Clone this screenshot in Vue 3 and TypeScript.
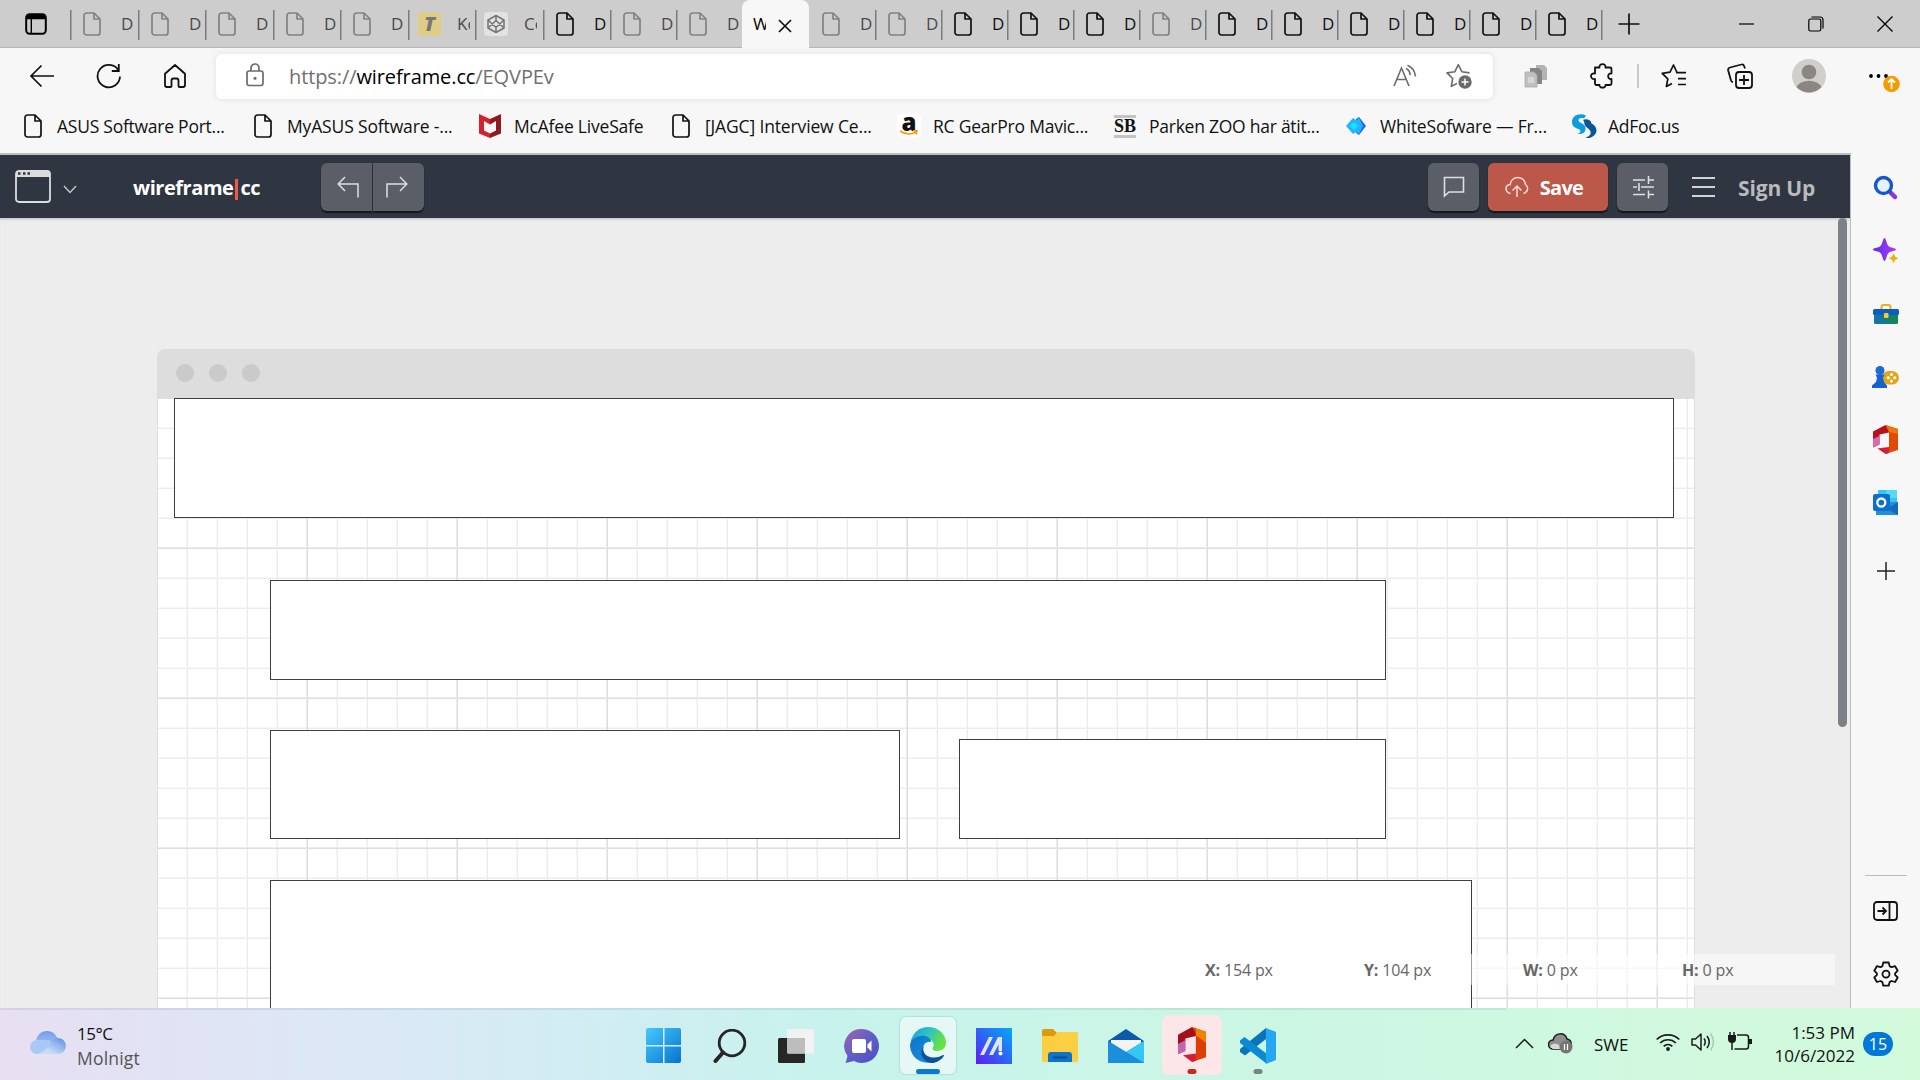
<script setup lang="ts">
interface Tab {
  width: number
  kind: 'page' | 'typo' | 'codepen' | 'active'
  label: string
  dim?: boolean
}

interface Bookmark {
  kind: string
  label: string
  width: number
  spacing: number
}

interface Block {
  x: number
  y: number
  w: number
  h: number
}

const tabs: Tab[] = [
  { width: 68, kind: 'page', label: 'D', dim: true },
  { width: 67, kind: 'page', label: 'D', dim: true },
  { width: 68, kind: 'page', label: 'D', dim: true },
  { width: 67, kind: 'page', label: 'D', dim: true },
  { width: 68, kind: 'page', label: 'D', dim: true },
  { width: 67, kind: 'typo', label: 'Ko', dim: true },
  { width: 68, kind: 'codepen', label: 'Co', dim: true },
  { width: 67, kind: 'page', label: 'D' },
  { width: 66, kind: 'page', label: 'D', dim: true },
  { width: 66, kind: 'page', label: 'D', dim: true },
  { width: 67, kind: 'active', label: 'W' },
  { width: 66, kind: 'page', label: 'D', dim: true },
  { width: 66, kind: 'page', label: 'D', dim: true },
  { width: 66, kind: 'page', label: 'D' },
  { width: 66, kind: 'page', label: 'D' },
  { width: 66, kind: 'page', label: 'D' },
  { width: 66, kind: 'page', label: 'D', dim: true },
  { width: 66, kind: 'page', label: 'D' },
  { width: 66, kind: 'page', label: 'D' },
  { width: 66, kind: 'page', label: 'D' },
  { width: 66, kind: 'page', label: 'D' },
  { width: 66, kind: 'page', label: 'D' },
  { width: 66, kind: 'page', label: 'D' },
]

const bookmarks: Bookmark[] = [
  { kind: 'page', label: 'ASUS Software Port...', width: 230, spacing: -0.25 },
  { kind: 'page', label: 'MyASUS Software -...', width: 227, spacing: -0.15 },
  { kind: 'mcafee', label: 'McAfee LiveSafe', width: 191, spacing: -0.2 },
  { kind: 'page', label: '[JAGC] Interview Ce...', width: 228, spacing: -0.15 },
  { kind: 'amazon', label: 'RC GearPro Mavic...', width: 216, spacing: -0.22 },
  { kind: 'sb', label: 'Parken ZOO har ätit...', width: 231, spacing: -0.25 },
  { kind: 'white', label: 'WhiteSofware — Fr...', width: 228, spacing: -0.17 },
  { kind: 'adfoc', label: 'AdFoc.us', width: 160, spacing: -0.25 },
]

/* Blocks placed on the wireframe canvas, relative to the grid's corner. */
const blocks: Block[] = [
  { x: 16, y: -1, w: 1500, h: 120 },
  { x: 112, y: 181, w: 1116, h: 100 },
  { x: 112, y: 331, w: 630, h: 109 },
  { x: 801, y: 340, w: 427, h: 100 },
  { x: 112, y: 481, w: 1202, h: 140 },
]

const readouts = [
  { key: 'X:', value: '154 px' },
  { key: 'Y:', value: '104 px' },
  { key: 'W:', value: '0 px' },
  { key: 'H:', value: '0 px' },
]
</script>

<template>
  <div class="desktop">
    <header class="tabstrip">
      <div class="tab-menu">
        <svg width="22" height="22" viewBox="0 0 22 22">
          <rect x="1.2" y="1.2" width="19.6" height="19.6" rx="3.5" fill="none" stroke="#000" stroke-width="2" />
          <path d="M1 6.2V4a3 3 0 0 1 3-3h14a3 3 0 0 1 3 3v2.2z" />
          <path d="M6.3 6v14" stroke="#000" stroke-width="1.4" />
        </svg>
      </div>
      <div
        v-for="(tab, i) in tabs"
        :key="i"
        class="tab"
        :class="{ dim: tab.dim, active: tab.kind === 'active', plain: i === 11 }"
        :style="{ width: tab.width + 'px' }"
      >
        <svg v-if="tab.kind === 'page'" class="fav" width="18" height="24" viewBox="0 0 18 24">
          <path d="M3.5 1H11l6 6v13.5a2.5 2.5 0 0 1-2.5 2.5h-11A2.5 2.5 0 0 1 1 20.500v-17A2.500 2.500 0 0 1 3.500 1zM11 1v6h6" fill="none" stroke="currentColor" stroke-width="1.7" stroke-linejoin="round" />
        </svg>
        <span v-else-if="tab.kind === 'typo'" class="fav typo">T</span>
        <span v-else-if="tab.kind === 'codepen'" class="fav codepen">
          <svg width="20" height="20" viewBox="0 0 20 20" fill="none" stroke="#777" stroke-width="1.6" stroke-linejoin="round">
            <path d="M10 1.500l8 4.500v8l-8 4.500L2 14V6zM10 1.500v5M10 13.500v5M2 6l8 7.500L18 6M2 14l8-7.500 8 7.500" />
          </svg>
        </span>
        <span class="tab-label">{{ tab.label }}</span>
        <svg v-if="tab.kind === 'active'" class="tab-close" width="14" height="14" viewBox="0 0 14 14">
          <path d="M1 1l12 12M13 1L1 13" stroke="#111" stroke-width="1.7" />
        </svg>
      </div>
      <div class="tab-end"></div>
      <svg class="new-tab" width="22" height="22" viewBox="0 0 22 22">
        <path d="M11 .5v21M.5 11h21" stroke="#111" stroke-width="1.7" />
      </svg>
      <div class="window-controls">
        <svg width="16" height="16" viewBox="0 0 16 16"><path d="M0 8h15" stroke="#000" stroke-width="1.2" /></svg>
        <svg width="16" height="16" viewBox="0 0 16 16" fill="none" stroke="#000" stroke-width="1.2">
          <rect x=".8" y="3" width="12" height="12" rx="1.800" />
          <path d="M3.500 1h8.500a3 3 0 0 1 3 3v8.500" />
        </svg>
        <svg width="16" height="16" viewBox="0 0 16 16"><path d="M.5.5l15 15M15.500.5l-15 15" stroke="#000" stroke-width="1.3" /></svg>
      </div>
    </header>

    <div class="toolbar">
      <div class="nav-icons">
        <svg width="26" height="24" viewBox="0 0 26 24" fill="none" stroke="#111" stroke-width="1.7">
          <path d="M25 12H2M12.500 1.500L2 12l10.500 10.500" />
        </svg>
        <svg width="26" height="26" viewBox="0 0 26 26" fill="none" stroke="#111" stroke-width="1.800">
          <path d="M24 13.500A11.200 11.200 0 1 1 22.300 7.200M22.800 1v7h-7" />
        </svg>
        <svg width="24" height="26" viewBox="0 0 24 26" fill="none" stroke="#111" stroke-width="1.8" stroke-linejoin="round">
          <path d="M12 2L2 10.800V22a2 2 0 0 0 2 2h3.500a1 1 0 0 0 1-1v-5.500a2 2 0 0 1 2-2h3a2 2 0 0 1 2 2V23a1 1 0 0 0 1 1H20a2 2 0 0 0 2-2V10.800z" />
        </svg>
      </div>
      <div class="address">
        <svg class="lock" width="18" height="24" viewBox="0 0 18 24" fill="none" stroke="#6b6b6b" stroke-width="1.7">
          <rect x="1" y="8" width="16" height="14.500" rx="2.200" />
          <path d="M5 8V5a4 4 0 0 1 8 0v3" />
          <circle cx="9" cy="15.200" r="1.500" fill="#6b6b6b" stroke="none" />
        </svg>
        <span class="url">https://<b>wireframe.cc</b>/EQVPEv</span>
        <svg class="read" width="24" height="24" viewBox="0 0 24 24" fill="none" stroke="#6b6b6b" stroke-width="1.600">
          <path d="M1 22L8.500 4l7.500 18M3.700 15.500h9.600M13 4.500c2.500 1 4 3.500 4 6.500M14.500 1.200c4.500 1.800 7.500 6 8 11.300" />
        </svg>
        <svg class="star-add" width="26" height="26" viewBox="0 0 26 26">
          <path d="M23.500 9.900L15.800 8.700 12.300 1.700 8.900 8.700 1 9.900l5.700 5.600L5.300 23.400l5.700-2.900" fill="none" stroke="#6b6b6b" stroke-width="1.600" stroke-linejoin="round" />
          <circle cx="19" cy="19" r="6.700" fill="#6b6b6b" />
          <path d="M19 15.500v7M15.500 19h7" stroke="#fff" stroke-width="1.500" />
        </svg>
      </div>
      <div class="actions">
        <svg width="24" height="24" viewBox="0 0 24 24">
          <path d="M12 1h8l3 3v12H12z" fill="#b4b4b4" />
          <path d="M6 4h9l3 3v13H6z" fill="#858585" />
          <path d="M1 8h9l3 3v12H1z" fill="#c0c0c0" stroke="#aaa" stroke-width=".8" />
          <path d="M4 13h6v6H4z" fill="#d6d6d6" />
        </svg>
        <svg width="24" height="26" viewBox="0 0 24 26" fill="none" stroke="#111" stroke-width="1.800" stroke-linejoin="round">
          <path d="M5 4.500h4.500c-.6-4.600 6.600-4.600 6 0H20a1.500 1.500 0 0 1 1.500 1.500v4.500c-4.500-.8-4.500 6.300 0 5.500V20.500A1.500 1.500 0 0 1 20 22h-4.500c.6 3.500-6.500 3.500-6 0H6.500A1.500 1.500 0 0 1 5 20.500V16c-5.300.8-5.300-6.500 0-5.500z" />
        </svg>
        <i class="bar"></i>
        <svg width="26" height="26" viewBox="0 0 26 26" fill="none" stroke="#111" stroke-width="1.700" stroke-linejoin="round">
          <path d="M16 9.500L12.500 2 9 9.200 1.200 10.400l5.600 5.400L5.400 23.500l5.600-3M15 9.700h10M17 15.700h8M17 21.500h8" />
        </svg>
        <svg width="26" height="26" viewBox="0 0 26 26" fill="none" stroke="#111" stroke-width="1.800">
          <path d="M18 5.500l-1-2.700A2 2 0 0 0 14.500 1.500L3 4.500A2.500 2.500 0 0 0 1.200 7.500L4 17.500a2.500 2.500 0 0 0 2 1.700" />
          <rect x="9" y="9" width="16" height="16" rx="3" />
          <path d="M17 12v10M12 17h10" />
        </svg>
        <svg width="34" height="34" viewBox="0 0 34 34">
          <circle cx="17" cy="17" r="17" fill="#d1cfcc" />
          <circle cx="17" cy="13" r="7.300" fill="#8b8682" />
          <path d="M4.500 28a13 8.500 0 0 1 25 0 17 17 0 0 1-25 0z" fill="#8b8682" />
        </svg>
        <svg width="32" height="28" viewBox="0 0 32 28">
          <circle cx="3" cy="6" r="1.900" /><circle cx="10.500" cy="6" r="1.900" /><circle cx="18" cy="6" r="1.900" />
          <circle cx="23.500" cy="14" r="8.300" fill="#f59a00" />
          <path d="M23.500 19V9.500M20 12.500l3.500-3.500 3.500 3.500" fill="none" stroke="#fff" stroke-width="1.800" />
        </svg>
      </div>
    </div>

    <nav class="bookmarks">
      <div v-for="b in bookmarks" :key="b.label" class="bookmark" :style="{ width: b.width + 'px' }">
        <span class="slot">
          <svg v-if="b.kind === 'page'" width="18" height="24" viewBox="0 0 18 24">
            <path d="M3.500 1H11l6 6v13.500a2.500 2.500 0 0 1-2.500 2.500h-11A2.500 2.500 0 0 1 1 20.500v-17A2.500 2.500 0 0 1 3.500 1zM11 1v6h6" fill="none" stroke="#111" stroke-width="1.700" stroke-linejoin="round" />
          </svg>
          <svg v-else-if="b.kind === 'mcafee'" width="22" height="24" viewBox="0 0 22 24">
            <path d="M0 0l11 5v19L0 19.500z" fill="#d3222c" />
            <path d="M22 0L11 5v19l11-4.500z" fill="#8e1a22" />
            <path d="M5 7l6 3.500L17 7v9.500l-6 3-6-3z" fill="#f7f7f7" />
          </svg>
          <span v-else-if="b.kind === 'amazon'" class="amazon">
            <i>a</i>
            <svg width="20" height="6" viewBox="0 0 20 6"><path d="M1 1q8.500 5.500 16 1M14 .8l4-.3-.8 4" fill="none" stroke="#f90" stroke-width="1.600" /></svg>
          </span>
          <span v-else-if="b.kind === 'sb'" class="sb">SB</span>
          <svg v-else-if="b.kind === 'white'" width="20" height="18" viewBox="0 0 20 18">
            <path d="M10 2l3-2 7 9-7 9-3-2z" fill="#1566ff" />
            <path d="M0 9l7-8 3 2 3-2 4 8-4 8-3-2-3 2z" fill="#25b4ff" />
            <path d="M4 9l4-4 4 4-4 4z" fill="#16e4ff" />
          </svg>
          <svg v-else width="25" height="24" viewBox="0 0 25 24">
            <path d="M14 1.500C8-1.500 0 1 0 8c0 6 5.500 6 8 8 1 1.500 0 3.500-2.500 3.500 5 1.500 8.500-1.500 8-5.500C13 9 7 9.500 6.500 6.500 6.500 4 9 3.500 12 4.500z" fill="#0e9be0" />
            <path d="M11 6c3-1.500 8-.5 8.500 3.500 6 3 7.500 10-.5 14-2 .8-4 .8-5.500 0 4-1 6.500-4 4.500-7C16.500 14 13 13 12.500 10 12.300 8 12 7 11 6z" fill="#0b5794" />
          </svg>
        </span>
        <span class="bookmark-label" :style="{ letterSpacing: b.spacing + 'px' }">{{ b.label }}</span>
      </div>
    </nav>

    <div class="viewport">
      <main class="app">
        <div class="app-bar">
          <svg class="window-icon" width="36" height="33" viewBox="0 0 36 33">
            <rect x="1" y="1" width="34" height="31" rx="3" fill="none" stroke="#dcdcdc" stroke-width="1.800" />
            <path d="M1 7V3a2 2 0 0 1 2-2h30a2 2 0 0 1 2 2v4z" fill="#dcdcdc" />
            <path d="M3 3.500h2.500M8 3.500h2.500M12.500 3.500H15" stroke="#2f3541" stroke-width="2.500" />
          </svg>
          <svg class="chevron" width="14" height="9" viewBox="0 0 14 9"><path d="M1 1l6 6.500L13 1" fill="none" stroke="#c9c9c9" stroke-width="1.300" /></svg>
          <div class="brand">wireframe<i></i>cc</div>
          <div class="history">
            <button class="btn left">
              <svg width="22" height="22" viewBox="0 0 22 22" fill="none" stroke="#dedfe1" stroke-width="1.500"><path d="M1.500 8H21v13.500M8 1L1.200 8 8 15" /></svg>
            </button>
            <button class="btn right">
              <svg width="22" height="22" viewBox="0 0 22 22" fill="none" stroke="#dedfe1" stroke-width="1.500"><path d="M20.500 8H1v13.500M14 1l6.800 7L14 15" /></svg>
            </button>
          </div>
          <div class="tools">
            <button class="btn icon">
              <svg width="22" height="22" viewBox="0 0 22 22" fill="none" stroke="#dedfe1" stroke-width="1.600"><path d="M1.500 1.500h19v14.500H6l-4.500 4z" /></svg>
            </button>
            <button class="btn save">
              <svg width="24" height="22" viewBox="0 0 24 22" fill="none" stroke="#f4dcd8" stroke-width="1.500">
                <path d="M5.500 17.500C-.5 16.500-.2 9 5 8.800 6.500-1 19-1 20.500 8.500c3 2 3 7.500-2 9M12 21V10.500M7.500 14.500L12 10l4.500 4.500" />
              </svg>
              <span>Save</span>
            </button>
            <button class="btn icon">
              <svg width="22" height="24" viewBox="0 0 22 24" fill="none" stroke="#dedfe1" stroke-width="1.600">
                <path d="M1 5h12M17 5h5M16.500 1v8M1 12h4M9 12h13M7 8v8M1 19.500h12M17 19.500h5M16.500 15.500v8" />
              </svg>
            </button>
            <svg class="hamburger" width="23" height="20" viewBox="0 0 23 20"><path d="M0 1h23M0 10h23M0 19h23" stroke="#d2d3d5" stroke-width="2" /></svg>
            <span class="signup">Sign Up</span>
          </div>
        </div>

        <div class="stage">
          <div class="frame">
            <div class="frame-head"><i></i><i></i><i></i></div>
            <div class="canvas">
              <div
                v-for="(k, i) in blocks"
                :key="i"
                class="block"
                :style="{ left: k.x + 'px', top: k.y + 'px', width: k.w + 'px', height: k.h + 'px' }"
              ></div>
            </div>
          </div>
          <div class="scroll-thumb"></div>
          <div class="readout">
            <span v-for="r in readouts" :key="r.key"><b>{{ r.key }}</b> {{ r.value }}</span>
          </div>
        </div>
      </main>

      <aside class="sidebar">
        <div class="side-item first">
          <svg width="26" height="26" viewBox="0 0 26 26">
            <path d="M17.500 17.500l4.500 4.500" stroke="#8a35e8" stroke-width="4.500" stroke-linecap="round" />
            <path d="M15.500 15.500l2.500 2.500" stroke="#555" stroke-width="2.500" />
            <circle cx="10.500" cy="10.500" r="8" fill="#e4f3fc" stroke="#1257cf" stroke-width="3.400" />
          </svg>
        </div>
        <div class="side-item">
          <svg width="26" height="26" viewBox="0 0 26 26">
            <defs><linearGradient id="spark" x1="0" x2="1"><stop stop-color="#5a2bea" /><stop offset="1" stop-color="#b03cf6" /></linearGradient></defs>
            <path d="M11.500 0c1.500 0 2 6 4 8s7.500 2 7.500 3.500-5.500 1.500-7.500 3.500-2.500 8-4 8-2-6-4-8S0 13 0 11.500 5.500 10 7.500 8s2.500-8 4-8z" fill="url(#spark)" />
            <path d="M20.500 14.500l1.700 4 3.800 1.700-3.800 1.700-1.700 4-1.700-4-3.800-1.700 3.800-1.700z" fill="#f0b000" stroke="#f7f7f7" stroke-width=".5" />
          </svg>
        </div>
        <div class="side-item">
          <svg width="26" height="20" viewBox="0 0 26 20">
            <defs><linearGradient id="box" x1="0" x2="1"><stop stop-color="#1472b8" /><stop offset="1" stop-color="#118a48" /></linearGradient></defs>
            <path d="M8.500 6V3a2 2 0 0 1 2-2h5a2 2 0 0 1 2 2v3" fill="none" stroke="#eeb015" stroke-width="2" />
            <rect x="1" y="8" width="24" height="12" rx="1.500" fill="url(#box)" />
            <rect x="0" y="5" width="26" height="6" rx="1.500" fill="#0c5cc4" />
            <rect x="11" y="9" width="4.500" height="5" rx="1" fill="#ffc72c" />
          </svg>
        </div>
        <div class="side-item">
          <svg width="27" height="22" viewBox="0 0 27 22">
            <rect x="10" y="5" width="17" height="13.500" rx="6.700" fill="#e4a51b" />
            <g fill="#fff"><circle cx="19.500" cy="8.500" r="1.500" /><circle cx="19.500" cy="15" r="1.500" /><circle cx="16.200" cy="11.700" r="1.500" /><circle cx="22.800" cy="11.700" r="1.500" /></g>
            <circle cx="8" cy="4.500" r="4.500" fill="#1a6bd6" />
            <path d="M3.500 8.500h9L11 12l1 4 3 3.500V22H0v-2.500L4 16l1-4z" fill="#1762cf" />
          </svg>
        </div>
        <div class="side-item">
          <svg width="25" height="29" viewBox="0 0 25 29">
            <path d="M0 6.500L12.500 0 16 2v5.500L6.500 9.500v10L0 22.500z" fill="#b5121b" />
            <path d="M0 14l6.500-3v8.500L0 22.500z" fill="#d86bab" />
            <path d="M12.500 0L25 4v21l-12.500 4L16 25V6z" fill="#e04a05" />
            <path d="M4.500 23.500L16 22v6l-3.500 1z" fill="#d51d3a" />
            <path d="M12.500 0L25 4v5L16 7z" fill="#ef7410" />
          </svg>
        </div>
        <div class="side-item">
          <svg width="25" height="25" viewBox="0 0 25 25">
            <path d="M5 0h19v12H5z" fill="#3ac2f2" /><path d="M13 0h11v8H13z" fill="#56d8fb" />
            <path d="M3 12h22v13H3z" fill="#1f90dc" /><path d="M25 12L14 19l11 6z" fill="#1769b5" />
            <rect x="0" y="4" width="17" height="17" rx="2" fill="#0b6fcb" />
            <circle cx="8.300" cy="12.500" r="4" fill="none" stroke="#fff" stroke-width="2.300" />
          </svg>
        </div>
        <div class="side-item plus">
          <svg width="18" height="18" viewBox="0 0 18 18"><path d="M9 0v18M0 9h18" stroke="#222" stroke-width="1.500" /></svg>
        </div>
        <div class="side-foot">
          <svg width="25" height="20" viewBox="0 0 25 20" fill="none" stroke="#111" stroke-width="1.800">
            <rect x="1" y="1" width="23" height="18" rx="3" /><path d="M16.500 1v18M4.500 10H13M9.500 6.500L13 10l-3.500 3.500" />
          </svg>
          <svg width="26" height="26" viewBox="0 0 26 26" fill="none" stroke="#111" stroke-width="1.800" stroke-linejoin="round">
            <path d="M10.300 1.500h5.400l.9 3.600 1.900 1.100 3.600-1 2.600 4.500-2.600 2.600v1.600l2.600 2.600-2.600 4.500-3.600-1-1.900 1.100-.9 3.600h-5.400l-.9-3.600-1.900-1.100-3.600 1L1.300 16.500l2.600-2.600v-1.600L1.300 9.700l2.600-4.500 3.600 1 1.900-1.100z" />
            <circle cx="13" cy="13.100" r="3.500" />
          </svg>
        </div>
      </aside>
    </div>

    <footer class="taskbar">
      <div class="weather">
        <svg width="36" height="23" viewBox="0 0 36 23">
          <defs>
            <linearGradient id="cl1" x1="0" y1="0" x2="0" y2="1"><stop stop-color="#6f9cec" /><stop offset="1" stop-color="#bcd6f7" /></linearGradient>
            <linearGradient id="cl2" x1="1" y1="0" x2="0" y2="1"><stop stop-color="#5d8be0" /><stop offset=".7" stop-color="#c5dcf8" /></linearGradient>
          </defs>
          <circle cx="17" cy="11" r="11" fill="url(#cl1)" />
          <rect x="0" y="9" width="24" height="14" rx="7" fill="#a9c8f4" />
          <path d="M7 23h21a8 8 0 1 0-7-12Q17 20 7 23z" fill="url(#cl2)" />
        </svg>
        <div class="weather-text"><span>15°C</span><small>Molnigt</small></div>
      </div>

      <div class="pins">
        <div class="pin">
          <svg width="36" height="36" viewBox="0 0 36 36">
            <defs><linearGradient id="win" x1="0" y1="0" x2="1" y2="1"><stop stop-color="#45c9fb" /><stop offset="1" stop-color="#0873cf" /></linearGradient></defs>
            <path d="M2 0h15v17H0V2a2 2 0 0 1 2-2zM18.500 0H33a2 2 0 0 1 2 2v15H18.500zM0 18.500h17V35H2a2 2 0 0 1-2-2zM18.500 18.500H35V33a2 2 0 0 1-2 2H18.500z" fill="url(#win)" />
          </svg>
        </div>
        <div class="pin">
          <svg width="34" height="34" viewBox="0 0 34 34" fill="none" stroke="#262626">
            <circle cx="19" cy="14" r="12.800" stroke-width="2.800" /><path d="M10 23.500L2.500 32" stroke-width="4" stroke-linecap="round" />
          </svg>
        </div>
        <div class="pin">
          <svg width="36" height="34" viewBox="0 0 36 34">
            <rect x="0" y="9" width="27" height="25" rx="1.500" fill="#272727" />
            <rect x="9" y="0" width="27" height="24.500" rx="1.500" fill="#f2f2f2" />
            <path d="M9 9h18v15.500H10.500A1.500 1.500 0 0 1 9 23z" fill="#bdbdbd" />
          </svg>
        </div>
        <div class="pin">
          <svg width="36" height="36" viewBox="0 0 36 36">
            <defs><linearGradient id="chat" x1="0" y1="0" x2="1" y2="1"><stop stop-color="#a263ae" /><stop offset=".5" stop-color="#5e5fc7" /><stop offset="1" stop-color="#504cc0" /></linearGradient></defs>
            <path d="M18 1a17 17 0 1 1-8 32L1.500 35l2-7A17 17 0 0 1 18 1z" fill="url(#chat)" />
            <rect x="8" y="11" width="14" height="14" rx="2" fill="#fff" /><path d="M23.500 16.500l4-4v11l-4-4z" fill="#fff" />
          </svg>
        </div>
        <div class="pin tile edge">
          <svg width="36" height="36" viewBox="0 0 36 36">
            <defs>
              <linearGradient id="eg" x1="0" y1="0" x2="1" y2=".4"><stop stop-color="#1b9de0" /><stop offset=".5" stop-color="#2bc3c4" /><stop offset="1" stop-color="#66e341" /></linearGradient>
              <linearGradient id="eb" x1="0" y1="0" x2="1" y2="1"><stop stop-color="#0d74cc" /><stop offset="1" stop-color="#1a8fdc" /></linearGradient>
            </defs>
            <path d="M.5 15C3 5 10 0 18 0c11 0 18 8 18 15.500C36 21 32 24 27 24c-3.500 0-5-1.500-4-3.500 2-3 0-9-7.500-9C8 11.500 2 13 .5 15z" fill="url(#eg)" />
            <path d="M0 18C1 8 19 5 21.500 15 16 14 12.500 18 13 23c.5 6 5 11 9.500 12C10 38.500 0 29 0 18z" fill="url(#eb)" />
            <path d="M14 19c-3 6 3 12 10 11.500 4 0 7-1.500 9-2.500.8-.3 1.200.4.700 1.200C31 33 26.500 36 21.500 36 13 35 8 26 14 19z" fill="#0f4f9b" />
          </svg>
          <i class="mark wide"></i>
        </div>
        <div class="pin">
          <svg width="36" height="36" viewBox="0 0 36 36">
            <defs><linearGradient id="arm" x1="0" y1="1" x2="1" y2="0"><stop stop-color="#6419f5" /><stop offset=".5" stop-color="#2b66f5" /><stop offset="1" stop-color="#05aaf7" /></linearGradient></defs>
            <path d="M0 0h36v36H0z" fill="url(#arm)" />
            <path d="M4 27L13 9h4L8 27zM13 27l9-18h4v14h-3.500v-6.500L17 27z" fill="#dfe6ff" /><circle cx="24.500" cy="25.500" r="2" fill="#fff" />
          </svg>
        </div>
        <div class="pin">
          <svg width="36" height="34" viewBox="0 0 36 34">
            <path d="M0 2a2 2 0 0 1 2-2h9l4 4-3 4H0z" fill="#dd9b0a" />
            <path d="M0 7h12l4-4h18a2 2 0 0 1 2 2v28H0z" fill="#fcce42" />
            <path d="M6 33v-7a3 3 0 0 1 3-3h18a3 3 0 0 1 3 3v7z" fill="#0f74c7" /><path d="M11 28.500h14" stroke="#0b4f94" stroke-width="2" />
          </svg>
        </div>
        <div class="pin">
          <svg width="36" height="34" viewBox="0 0 36 34">
            <path d="M0 12L18 0l18 12v10H0z" fill="#0c59a8" /><path d="M3 11h30v13H3z" fill="#f3f3f3" />
            <path d="M0 12l18 11L36 12v22H0z" fill="#1c96e2" /><path d="M18 23l18-11v22z" fill="#36c6f4" /><path d="M0 34V12l36 22z" fill="#1b8fdc" />
          </svg>
        </div>
        <div class="pin tile office">
          <svg width="28" height="35" viewBox="0 0 25 29" preserveAspectRatio="none">
            <path d="M0 6.500L12.500 0 16 2v5.500L6.500 9.500v10L0 22.500z" fill="#a50f18" />
            <path d="M0 14l6.500-3v9L0 22.500z" fill="#c165b5" />
            <path d="M12.500 0L25 4v21l-12.500 4 3.500-4V6z" fill="#dc3f04" />
            <path d="M4.500 23.500L16 22v6l-3.500 1z" fill="#d51d3a" />
            <path d="M16 1l9 3v9l-9-6z" fill="#f08205" />
          </svg>
          <i class="mark red"></i>
        </div>
        <div class="pin">
          <svg width="36" height="36" viewBox="0 0 36 36">
            <path d="M26 0v11L5 27.500 0 24v-3z" fill="#0a73ba" /><path d="M0 12.500L4.500 9 27 26v10L0 15z" fill="#0a8ad2" />
            <path d="M26 0l10 4v28l-10 4z" fill="#25a7f2" />
          </svg>
          <i class="mark grey"></i>
        </div>
      </div>

      <div class="tray">
        <svg class="t-chev" width="19" height="11" viewBox="0 0 19 11"><path d="M1 10l8.500-8.500L18 10" fill="none" stroke="#1b1b1b" stroke-width="1.500" /></svg>
        <svg class="t-cloud" width="25" height="21" viewBox="0 0 25 21">
          <path d="M5 16a4.500 4.500 0 0 1 0-9C7-1 17-1 19 6c6 1 5 10 0 10z" fill="#8f8f8f" stroke="#1b1b1b" stroke-width="1.500" />
          <path d="M2 14c1-4 6-4 9-2l3 4H5z" fill="#d8d8d8" />
          <circle cx="18" cy="14" r="6.500" fill="#757575" /><path d="M16.500 11v6M19.500 11v6" stroke="#fff" stroke-width="1.200" />
        </svg>
        <span class="lang">SWE</span>
        <svg class="t-wifi" width="24" height="18" viewBox="0 0 24 18" fill="none" stroke="#1b1b1b" stroke-width="1.700">
          <path d="M.7 6.500a16 16 0 0 1 22.600 0M4.200 10a11 11 0 0 1 15.600 0M7.700 13.300a6 6 0 0 1 8.600 0" /><circle cx="12" cy="16" r="1.900" fill="#1b1b1b" stroke="none" />
        </svg>
        <svg class="t-vol" width="24" height="20" viewBox="0 0 24 20" fill="none" stroke="#1b1b1b" stroke-width="1.500">
          <path d="M1 7v6h3.500l5.500 5V2L4.500 7zM13 6.500q2.500 3.500 0 7M16 4q4.500 6 0 12" stroke-linejoin="round" /><path d="M19.500 1.500q6 8.500 0 17" stroke="#a5cbb9" />
        </svg>
        <svg class="t-bat" width="24" height="19" viewBox="0 0 24 19" fill="none" stroke="#1b1b1b" stroke-width="1.500">
          <path d="M9 3h9a2.500 2.500 0 0 1 2.500 2.500v9A2.500 2.500 0 0 1 18 17H6.500M4 8v10" /><path d="M0 3h8v4a4 4 0 0 1-8 0z" fill="#1b1b1b" stroke="none" /><path d="M2 0v4M6 0v4" /><path d="M22.500 7v5" stroke-width="3" />
        </svg>
        <div class="clock"><span>1:53 PM</span><span>10/6/2022</span></div>
        <span class="badge">15</span>
      </div>
    </footer>
  </div>
</template>

<style>
html,
body {
  margin: 0;
  overflow: hidden;
}
</style>

<style scoped>
.desktop {
  width: 1920px;
  height: 1080px;
  display: flex;
  flex-direction: column;
  overflow: hidden;
  background: #f7f7f7;
  color: #111;
  font-family: "Open Sans", "Noto Sans", sans-serif;
  font-size: 17px;
}
svg {
  display: block;
  flex: none;
}
.tabstrip {
  height: 48px;
  flex: none;
  display: flex;
  background: #cdcdcd;
  box-shadow: inset 0 -2px 1px -1px #b4b4b4;
}
.tab-menu {
  width: 70px;
  flex: none;
  box-sizing: border-box;
  padding: 13px 0 0 25px;
}
.tab {
  height: 48px;
  flex: none;
  box-sizing: border-box;
  display: flex;
  align-items: center;
  background: linear-gradient(#7b7b7b, #7b7b7b) 0 10px / 1.500px 30px no-repeat;
}
.tab .fav {
  margin-left: 13px;
  margin-right: 20px;
  flex: none;
}
.dim .fav {
  color: #828282;
}
.tab-label {
  font-size: 17px;
  line-height: 24px;
  width: 13px;
  overflow: hidden;
  white-space: nowrap;
}
.dim .tab-label {
  color: #4a4a4a;
}
.plain {
  background: none;
}
.tab .typo {
  width: 23px;
  height: 24px;
  margin-left: 10px;
  margin-right: 16px;
  background: #dfcd87;
  color: #777;
  font: italic 800 20px/24px "Open Sans", sans-serif;
  text-align: center;
}
.tab .codepen {
  width: 24px;
  height: 24px;
  margin-left: 9px;
  margin-right: 16px;
  border-radius: 4px;
  background: #e3e3e3;
  display: grid;
  place-items: center;
}
.tab.active {
  background: #f7f7f7;
  border-radius: 8px 8px 0 0;
  padding-left: 11px;
  color: #000;
}
.active .tab-label {
  width: 13px;
}
.tab-close {
  margin: 3px 0 0 12px;
}
.tab-end {
  width: 2px;
  background: linear-gradient(#7b7b7b, #7b7b7b) 0 10px / 1.500px 30px no-repeat;
}
.new-tab {
  margin: 13px 0 0 15px;
}
.window-controls {
  margin: 16px 27px 0 auto;
  display: flex;
  gap: 53px;
}
.toolbar {
  height: 56px;
  flex: none;
  display: flex;
  align-items: center;
}
.nav-icons {
  width: 216px;
  flex: none;
  box-sizing: border-box;
  padding-left: 29px;
  display: flex;
  align-items: center;
  gap: 41px;
}
.address {
  width: 1277px;
  flex: none;
  height: 45px;
  box-sizing: border-box;
  display: flex;
  align-items: center;
  background: #fff;
  border-radius: 6px;
  box-shadow: 0 0 6px rgba(0, 0, 0, 0.1);
  padding: 0 21px 0 30px;
}
.lock {
  margin-top: -2px;
}
.url {
  margin: 1px 0 0 25px;
  font-size: 20px;
  line-height: 28px;
  letter-spacing: -0.100px;
  color: #707070;
}
.url b {
  font-weight: 400;
  color: #000;
}
.read {
  margin-left: auto;
  margin-right: 29px;
}
.actions {
  flex: 1;
  display: flex;
  align-items: center;
  padding-left: 31px;
}
.actions > :nth-child(2) {
  margin-left: 42px;
}
.actions .bar {
  width: 1.500px;
  height: 24px;
  background: #c8c8c8;
  margin-left: 23px;
}
.actions > :nth-child(4) {
  margin-left: 22px;
}
.actions > :nth-child(5) {
  margin-left: 40px;
}
.actions > :nth-child(6) {
  margin-left: 39px;
}
.actions > :nth-child(7) {
  margin-left: 42px;
  margin-top: 15px;
}
.bookmarks {
  height: 49px;
  flex: none;
  box-sizing: border-box;
  display: flex;
  padding: 10px 0 0 21px;
}
.bookmark {
  flex: none;
  height: 24px;
  display: flex;
  align-items: center;
}
.slot {
  width: 24px;
  height: 24px;
  display: flex;
  justify-content: center;
  align-items: center;
  margin-right: 12px;
}
.bookmark-label {
  white-space: nowrap;
  font-size: 17.500px;
  line-height: 24px;
  margin-top: -1px;
}
.amazon {
  width: 24px;
  height: 24px;
  border-radius: 4px;
  background: #fff;
  display: flex;
  flex-direction: column;
  align-items: center;
}
.amazon i {
  font: 800 24px/18px "Open Sans", sans-serif;
  height: 17px;
  margin-top: -1px;
}
.sb {
  font: bold 18px/17px "Liberation Serif", serif;
  border-top: 3px solid #c4c4c4;
  border-bottom: 3px solid #c4c4c4;
}
.viewport {
  height: 855px;
  flex: none;
  display: flex;
}
.app {
  width: 1850px;
  box-sizing: content-box;
  flex: none;
  display: flex;
  flex-direction: column;
  border-top: 2px solid #bdbdbd;
  border-right: 1px solid #bdbdbd;
}
.app-bar {
  height: 63px;
  flex: none;
  display: flex;
  background: #2f3541;
}
.window-icon {
  margin: 15px 0 0 15px;
}
.chevron {
  margin: 30px 0 0 12px;
}
.brand {
  display: flex;
  align-items: center;
  height: 25px;
  margin: 20px 0 0 56px;
  width: 133px;
  color: #fff;
  font-weight: 700;
  font-size: 20px;
  letter-spacing: -0.450px;
}
.brand i {
  width: 3px;
  height: 21px;
  margin: 4px 2px 0;
  background: #ee5b45;
}
.history {
  margin: 8px 0 0 55px;
  display: flex;
  gap: 1px;
}
.btn {
  height: 48px;
  padding: 0;
  border: 0;
  border-radius: 6px;
  background: #5a5e67;
  box-shadow: 0 2px 1px #15181d;
  display: flex;
  align-items: center;
  justify-content: center;
  font-family: inherit;
}
.btn.left {
  width: 51px;
  border-radius: 6px 0 0 6px;
}
.btn.right {
  width: 51px;
  border-radius: 0 6px 6px 0;
}
.history .left svg {
  margin-left: 3px;
}
.history .right svg {
  margin-right: 3px;
}
.tools {
  margin: 8px 35px 0 auto;
  display: flex;
  height: 48px;
}
.btn.icon {
  width: 51px;
}
.btn.save {
  width: 120px;
  margin: 0 9px;
  background: #bb584a;
  gap: 11px;
  padding-right: 8px;
  color: #fff;
  font-weight: 700;
  font-size: 20px;
  letter-spacing: -0.700px;
}
.hamburger {
  margin: 14px 23px 0 24px;
}
.signup {
  line-height: 50px;
  font-size: 21px;
  font-weight: 700;
  color: #b9babd;
  width: 77px;
  letter-spacing: -0.150px;
  white-space: nowrap;
}
.stage {
  position: relative;
  flex: 1;
  background: #ededed;
  overflow: hidden;
  box-shadow: inset 0 3px 3px -2px #bbb;
}
.frame {
  box-sizing: border-box;
  margin: 131px 0 0 157px;
  width: 1538px;
}
.frame-head {
  box-sizing: border-box;
  height: 49px;
  background: #ddd;
  border-radius: 8px 8px 0 0;
  display: flex;
  align-items: center;
  gap: 15px;
  padding: 0 0 2px 19px;
}
.frame-head i {
  width: 18px;
  height: 18px;
  border-radius: 50%;
  background: #cacaca;
}
.canvas {
  position: relative;
  height: 640px;
  margin: 0 1px;
  box-shadow: -1px 0 #dedede, 1px 0 #dedede;
  --minor: transparent 0 28px, #f6f6f6 28px 29px, #ececec 29px 30px;
  --major: transparent 0 148px, #ececec 148px 149px, #dedede 149px 150px;
  background:
    repeating-linear-gradient(90deg, var(--major)) 0 1px,
    repeating-linear-gradient(180deg, var(--major)) 0 1px / 100% 750px,
    repeating-linear-gradient(90deg, var(--minor)) 0 1px,
    repeating-linear-gradient(180deg, var(--minor)) 0 1px / 100% 750px,
    #fff;
}
.block {
  position: absolute;
  box-sizing: border-box;
  border: 1px solid #3f3f42;
  background: #fff;
  margin-top: 1px;
}
.scroll-thumb {
  position: absolute;
  right: 3px;
  top: 0;
  width: 9px;
  height: 509px;
  border-radius: 5px;
  background: #7d8087;
}
.readout {
  position: absolute;
  left: 1190px;
  top: 736px;
  width: 645px;
  height: 31px;
  box-sizing: border-box;
  padding-left: 15px;
  display: flex;
  background: rgba(255, 255, 255, 0.500);
  color: #666;
  font-size: 16px;
  line-height: 32px;
  letter-spacing: -0.150px;
}
.readout span {
  flex: none;
  width: 159px;
}
.sidebar {
  flex: 1;
  display: flex;
  flex-direction: column;
  align-items: center;
}
.side-item {
  height: 63px;
  display: flex;
  align-items: center;
}
.side-item.plus {
  height: 74px;
}
.side-item.first {
  margin-top: 3px;
}
.side-foot {
  margin-top: auto;
  border-top: 1.500px solid #bdbdbd;
  width: 42px;
  height: 133px;
  box-sizing: border-box;
  display: flex;
  flex-direction: column;
  align-items: center;
  gap: 40px;
  padding-top: 25px;
}
.taskbar {
  height: 72px;
  flex: none;
  display: flex;
  position: relative;
  background:
    linear-gradient(rgba(90, 130, 140, 0.140), rgba(90, 130, 140, 0.140)) 0 0 / 1506px 2px no-repeat,
    linear-gradient(90deg, #e8dff2 0, #e2e2f4 130px, #dde7f6 320px, #cfeef2 630px, #c7f3ec 850px, #cbf6e5 1200px, #cef8e1 1500px, #d2fadb 1920px);
}
.weather {
  width: 631px;
  display: flex;
  padding: 23px 0 0 30px;
  box-sizing: border-box;
}
.weather-text {
  margin: -9px 0 0 11px;
  display: flex;
  flex-direction: column;
  line-height: 24px;
  font-size: 17px;
}
.weather-text span {
  letter-spacing: -0.500px;
}
.weather-text small {
  font-size: 17.500px;
  letter-spacing: 0.200px;
  color: #555;
}
.pins {
  display: flex;
}
.pin {
  position: relative;
  width: 60px;
  height: 57px;
  margin: 9px 3px 0 3px;
  display: flex;
  align-items: center;
  justify-content: center;
}
.pin.edge {
  width: 56px;
  margin: 9px 5px 0 5px;
  background: #e5f8f5;
  border-radius: 6px;
  box-shadow: 0 0 1px 1px rgba(120, 170, 165, 0.250);
}
.pin.edge svg,
.pin.office svg {
  margin-top: -1px;
}
.pin.office {
  height: 60px;
  margin-top: 7px;
  background: #fce6e8;
  border-radius: 7px;
}
.mark {
  position: absolute;
  bottom: 0;
  left: 50%;
  transform: translateX(-50%);
  width: 9px;
  height: 5px;
  border-radius: 3px;
}
.wide {
  width: 24px;
  background: #0b78d4;
}
.red {
  background: #c42b1c;
  bottom: 1px;
}
.grey {
  background: #74877f;
}
.tray {
  margin-left: auto;
  display: flex;
  align-items: flex-start;
  padding-right: 27px;
}
.t-chev {
  margin: 30px 14px 0 0;
}
.t-cloud {
  margin: 25px 21px 0 0;
}
.lang {
  line-height: 24px;
  margin-top: 25px;
  width: 62px;
  font-size: 17px;
  letter-spacing: 0;
}
.t-wifi {
  margin: 25px 11px 0 0;
}
.t-vol {
  margin: 24px 13px 0 0;
}
.t-bat {
  margin: 24px 0 0 0;
}
.clock {
  width: 103px;
  margin-top: 13px;
  text-align: right;
  display: flex;
  flex-direction: column;
  line-height: 23px;
  font-size: 17px;
  letter-spacing: 0;
}
.badge {
  margin: 24px 0 0 8px;
  width: 30px;
  height: 24px;
  border-radius: 12px;
  background: #0078d7;
  color: #fff;
  font-size: 16px;
  line-height: 24px;
  text-align: center;
}
</style>
